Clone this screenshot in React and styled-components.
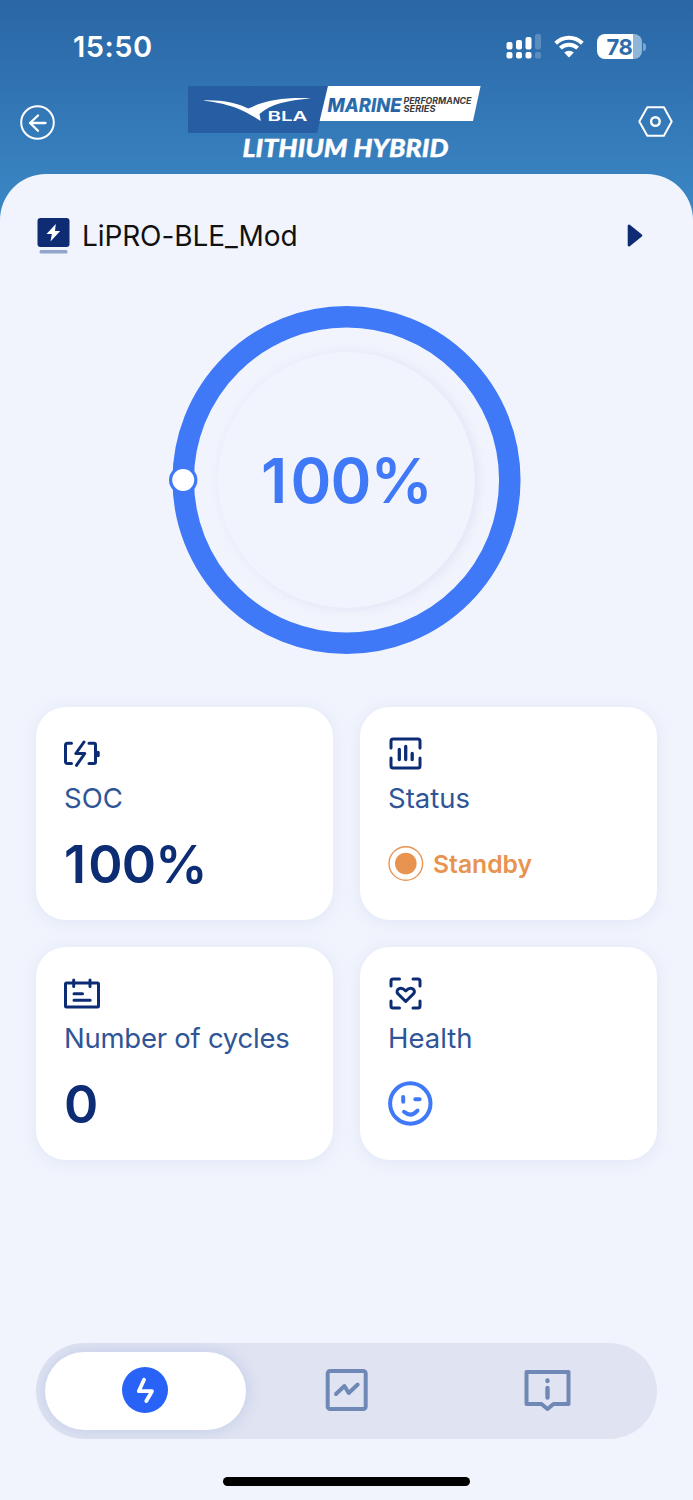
import React from 'react'
import styled, { createGlobalStyle } from 'styled-components'

const GlobalStyle = createGlobalStyle`
	* {
		box-sizing: border-box;
	}

	body {
		margin: 0;
		background: #f1f4fc;
		font-family: Inter, 'Liberation Sans', sans-serif;
	}

	svg {
		display: block;
		flex-shrink: 0;
	}
`

const Screen = styled.div`
	display: flex;
	flex-direction: column;
	width: 693px;
	height: 1500px;
	overflow: hidden;
	background: linear-gradient(#2a66a6 0, #3881bf 175px, #3a88c8 220px);
`

const StatusBar = styled.div`
	display: flex;
	justify-content: space-between;
	align-items: center;
	height: 86px;
	padding: 7px 47px 0 73px;
`

const Time = styled.div`
	color: #fff;
	font-size: 29px;
	font-weight: 600;
	letter-spacing: 0.5px;
	line-height: 34px;
`

const StatusIcons = styled.div`
	display: flex;
	align-items: center;
	gap: 13px;
`

const BatteryWrap = styled.div`
	display: flex;
	align-items: center;
	gap: 1px;
`

const Battery = styled.div`
	display: flex;
	align-items: center;
	justify-content: center;
	width: 45px;
	height: 25px;
	border-radius: 8px;
	background: linear-gradient(90deg, #fff 36px, #8fb6d8 36px);
	color: #2d6bab;
	font-size: 22px;
	font-weight: 700;
	letter-spacing: -0.5px;
`

const BatteryNub = styled.div`
	width: 3px;
	height: 8px;
	border-radius: 0 3px 3px 0;
	background: #7aa7cf;
`

const Header = styled.header`
	display: flex;
	justify-content: space-between;
	height: 88px;
	padding: 0 20px;
`

const LogoWrap = styled.div`
	margin-right: 24px;
`

const HeaderButton = styled.button`
	height: 36px;
	margin-top: ${({ $top }) => $top}px;
	padding: 0;
	border: 0;
	background: none;
`

const Panel = styled.main`
	display: flex;
	flex: 1;
	flex-direction: column;
	padding: 0 36px;
	border-radius: 46px 46px 0 0;
	background: #f1f4fc;
`

const DeviceRow = styled.div`
	display: flex;
	align-items: center;
	height: 36px;
	margin-top: 44px;
	padding: 0 14px 0 1px;
`

const DeviceName = styled.div`
	flex: 1;
	margin-left: 12px;
	color: #111;
	font-size: 28px;
	letter-spacing: -0.1px;
	line-height: 36px;
`

const Gauge = styled.div`
	display: grid;
	place-items: center;
	height: 352px;
	margin-top: 50px;

	> * {
		grid-area: 1 / 1;
	}
`

const GaugeFace = styled.div`
	width: 257px;
	height: 256px;
	border-radius: 50%;
	box-shadow: 3px 1px 10px rgba(212, 215, 240, 0.55);
	background: #f1f4fc;
`

const GaugeValue = styled.div`
	z-index: 1;
	padding-top: 2px;
	color: #4079f7;
	font-size: 62px;
	font-weight: 600;
	letter-spacing: -0.8px;
	line-height: 62px;

	&::first-letter {
		margin-right: 4px;
	}
`

const Cards = styled.div`
	display: grid;
	grid-template-columns: 1fr 1fr;
	grid-auto-rows: 213px;
	gap: 27px;
	margin-top: 51px;
`

const CardBox = styled.section`
	padding: 29px 28px 0;
	border-radius: 30px;
	background: #fff;
	box-shadow: 0 2px 14px rgba(205, 217, 246, 0.5);
`

const CardLabel = styled.div`
	margin-top: 8px;
	color: #2f5597;
	font-size: 27.5px;
	letter-spacing: ${({ $tight }) => ($tight ? '-0.25px' : '0')};
	line-height: 36px;
`

const CardBody = styled.div`
	display: flex;
	align-items: center;
	height: 60px;
	margin-top: 17px;
`

const Value = styled.div`
	padding-top: 3px;
	color: #0c2c74;
	font-size: 52px;
	font-weight: 600;
	letter-spacing: -0.8px;
	line-height: 60px;

	&::first-letter {
		margin-right: 3px;
	}
`

const StatusText = styled.div`
	margin-left: 9px;
	padding-top: 1px;
	color: #e89350;
	font-size: 24.7px;
	font-weight: 600;
`

const TabBar = styled.nav`
	display: grid;
	grid-template-columns: repeat(3, 201px);
	height: 96px;
	margin-top: 183px;
	padding: 9px;
	border-radius: 48px;
	background: #e0e4f2;
	overflow: hidden;
`

const Tab = styled.button`
	display: flex;
	align-items: center;
	justify-content: center;
	padding: 0 1px 3px 0;
	border: 0;
	border-radius: 39px;
	background: ${({ $active }) => ($active ? '#fff' : 'none')};
	box-shadow: ${({ $active }) =>
		$active ? '0 0 18px rgba(178, 192, 228, 0.7)' : 'none'};
`

const HomeIndicator = styled.div`
	align-self: center;
	width: 247px;
	height: 9px;
	margin-top: 37.5px;
	border-radius: 5px;
	background: #000;
`

const SignalIcon = () => (
	<svg width='35' height='25' viewBox='0 0 35 25' fill='#fff'>
		<rect x='.5' y='8' width='6' height='7.5' rx='2' />
		<rect x='10' y='6' width='6' height='9.5' rx='2' />
		<rect x='19.5' y='3' width='6' height='12.5' rx='2' />
		<rect x='29' y='0' width='6' height='15.5' rx='2' opacity='.22' />
		<rect x='.5' y='18' width='6' height='6.5' rx='2' />
		<rect x='10' y='18' width='6' height='6.5' rx='2' />
		<rect x='19.5' y='18' width='6' height='6.5' rx='2' />
		<rect x='29' y='18' width='6' height='6.5' rx='2' opacity='.22' />
	</svg>
)

const WifiIcon = () => (
	<svg width='30' height='23' viewBox='0 0 30 23' fill='none'>
		<path
			d='M1.7 8.2a19 19 0 0 1 26.6 0M6.4 13.2a12.2 12.2 0 0 1 17.2 0'
			stroke='#fff'
			strokeWidth='4'
		/>
		<path
			d='M10.2 17.6a7 7 0 0 1 9.6 0l-4.2 4.5a.9.9 0 0 1-1.2 0z'
			fill='#fff'
		/>
	</svg>
)

const BackIcon = () => (
	<svg
		width='35'
		height='35'
		viewBox='0 0 35 35'
		fill='none'
		stroke='#fff'
		strokeWidth='2'
		strokeLinecap='round'
		strokeLinejoin='round'>
		<circle cx='17.5' cy='17.5' r='16.3' />
		<path d='M25.5 18H10M18 10.5 10 18l8 7.8' strokeWidth='2.3' />
	</svg>
)

const SettingsIcon = () => (
	<svg
		width='35'
		height='31'
		viewBox='0 0 35 31'
		fill='none'
		stroke='#fff'
		strokeWidth='2'>
		<path
			d='M9.3 1.2h16.6l7.8 14.3-7.8 14.2H9.3L1.3 15.5z'
			strokeLinejoin='round'
		/>
		<circle cx='17.4' cy='15.5' r='4.3' strokeWidth='2.4' />
	</svg>
)

const Logo = () => (
	<svg width='293' height='76' viewBox='0 0 293 76'>
		<defs>
			<linearGradient id='marine' x1='0' y1='0' x2='1' y2='1'>
				<stop offset='0' stopColor='#1f5598' />
				<stop offset='0.5' stopColor='#2d72b2' />
				<stop offset='1' stopColor='#23569a' />
			</linearGradient>
		</defs>
		<path d='M0 0h140l-11 47H0z' fill='#265da3' />
		<path d='M140 0h152.6l-7.6 35H131.6z' fill='#fff' />
		<path
			d='M15 14.4C35 13.8 49 17 60.3 22.6 76 14.5 96 11.2 123 12.3 99 14.4 82 18.5 71.5 28l1.3 6.9C62 28.5 50 18.5 15 14.4z'
			fill='#fff'
		/>
		<text
			x='79.5'
			y='35.3'
			fill='#fff'
			fontSize='13'
			fontWeight='600'
			textLength='40'
			lengthAdjust='spacingAndGlyphs'>
			BLA
		</text>
		<text
			x='139.5'
			y='25.8'
			fill='url(#marine)'
			fontSize='19'
			fontWeight='800'
			fontStyle='italic'
			textLength='74'
			lengthAdjust='spacingAndGlyphs'>
			MARINE
		</text>
		<g fill='#3a3a3c' fontSize='9' fontWeight='700' fontStyle='italic'>
			<text
				x='215.5'
				y='18.4'
				textLength='68'
				lengthAdjust='spacingAndGlyphs'>
				PERFORMANCE
			</text>
			<text
				x='215.5'
				y='26.3'
				textLength='32'
				lengthAdjust='spacingAndGlyphs'>
				SERIES
			</text>
		</g>
		<text
			x='54.5'
			y='70.6'
			fill='#fff'
			stroke='#fff'
			strokeWidth='0.4'
			fontFamily='Lato, sans-serif'
			fontSize='25'
			fontWeight='900'
			fontStyle='italic'
			textLength='206'
			lengthAdjust='spacingAndGlyphs'>
			LITHIUM HYBRID
		</text>
	</svg>
)

const DeviceIcon = () => (
	<svg width='33' height='36' viewBox='0 0 33 36'>
		<rect x='.5' y='0' width='32' height='29' rx='3' fill='#0e2b73' />
		<path d='M18.8 6 9.5 16h5.4l-1.4 7.5L23.2 13H18z' fill='#fff' />
		<rect x='2.5' y='32' width='28' height='3.4' rx='1.5' fill='#93a5cd' />
	</svg>
)

const ArrowIcon = () => (
	<svg width='16' height='24' viewBox='0 0 16 24'>
		<path
			d='M2 1.8v19.5L14 11.5z'
			fill='#0e2b73'
			stroke='#0e2b73'
			strokeWidth='2.6'
			strokeLinejoin='round'
		/>
	</svg>
)

const GaugeRing = () => (
	<svg width='355' height='352' viewBox='0 0 355 352' fill='none'>
		<circle
			cx='177.5'
			cy='176'
			r='163.3'
			stroke='#4079f7'
			strokeWidth='21.5'
		/>
		<circle cx='14.2' cy='176' r='14.2' fill='#4079f7' />
		<circle cx='14.2' cy='176' r='11' fill='#fff' />
	</svg>
)

const CardIcon = ({ children }) => (
	<svg
		width='36'
		height='36'
		viewBox='0 0 36 36'
		fill='none'
		stroke='#0c2c74'
		strokeWidth='3'
		strokeLinecap='round'
		strokeLinejoin='round'>
		{children}
	</svg>
)

const SocIcon = () => (
	<CardIcon>
		<path d='M7.5 7.3h-4q-2 0-2 2v16.2q0 2 2 2h4M25 7.3h5q1.500 0 1.500 1.500V26q0 1.500-1.500 1.500h-5' />
		<path d='M20 6 11.8 17.5h9L12.5 29.3' />
		<path d='M34 16.500v3' strokeWidth='3.5' />
	</CardIcon>
)

const StatusIcon = () => (
	<CardIcon>
		<path d='M3 12V5q0-2 2-2h25q2 0 2 2v7M3 22v8q0 2 2 2h25q2 0 2-2v-8' />
		<path
			d='M11.3 13.5v10M17.7 10.3v13.200M24.200 17.500v6'
			strokeWidth='3.3'
		/>
	</CardIcon>
)

const CyclesIcon = () => (
	<CardIcon>
		<rect x='1.5' y='7' width='33' height='24' rx='1' />
		<path d='M9.700 4v6.500M26 4v6.500M10 17.800h8.500M10 24.300h16.200' />
	</CardIcon>
)

const HealthIcon = () => (
	<CardIcon>
		<path d='M3 10V5q0-2 2-2h6.500M25 3h5q2 0 2 2v5M3 25v5q0 2 2 2h6.500M25 32h5q2 0 2-2v-5' />
		<path d='M17.700 25.500 9.800 17.600C7 13.500 12.500 9.800 17.700 14.800 23 9.800 28.500 13.500 25.600 17.600z' />
	</CardIcon>
)

const StandbyIcon = () => (
	<svg width='36' height='36' viewBox='0 0 36 36' fill='none'>
		<circle cx='17.8' cy='18.5' r='16.8' stroke='#e89350' strokeWidth='1.4' />
		<circle cx='17.8' cy='18.5' r='10.8' fill='#e89350' />
	</svg>
)

const SmileIcon = () => (
	<svg
		width='45'
		height='45'
		viewBox='0 0 45 45'
		fill='none'
		stroke='#4079f7'
		strokeWidth='4'
		strokeLinecap='round'>
		<circle cx='22.3' cy='22.5' r='20.2' />
		<path d='M15.2 16v4.800M27.300 18.300h4.300M16 30.800q7 6 13.500-1.200' />
	</svg>
)

const PowerIcon = () => (
	<svg width='46' height='46' viewBox='0 0 46 46' fill='none'>
		<circle cx='23' cy='23' r='23' fill='#2862f6' />
		<path
			d='M22 12.8 16.800 24.200H30L24.300 34'
			stroke='#fff'
			strokeWidth='3.8'
			strokeLinecap='round'
			strokeLinejoin='round'
		/>
	</svg>
)

const ChartIcon = () => (
	<svg
		width='43'
		height='42'
		viewBox='0 0 43 42'
		fill='none'
		stroke='#7088b6'
		strokeWidth='4'
		strokeLinecap='round'
		strokeLinejoin='round'>
		<rect x='2.7' y='2' width='38' height='38' rx='2.5' />
		<path d='m11 25 8.400-8 4.300 7 9-8.500' />
	</svg>
)

const InfoIcon = () => (
	<svg
		width='47'
		height='42'
		viewBox='0 0 47 42'
		fill='none'
		stroke='#7088b6'
		strokeWidth='4'
		strokeLinecap='round'
		strokeLinejoin='round'>
		<path d='M2.5 3h42v32H29.500l-6 5-6-5h-15z' />
		<path d='M23.500 11.500v.5M23.500 19v9.500' strokeWidth='4.4' />
	</svg>
)

const Card = ({ icon, label, children }) => {
	return (
		<CardBox>
			{icon}
			<CardLabel $tight={label.length > 10}>{label}</CardLabel>
			<CardBody>{children}</CardBody>
		</CardBox>
	)
}

const App = () => {
	return (
		<Screen>
			<GlobalStyle />
			<StatusBar>
				<Time>15:50</Time>
				<StatusIcons>
					<SignalIcon />
					<WifiIcon />
					<BatteryWrap>
						<Battery>78</Battery>
						<BatteryNub />
					</BatteryWrap>
				</StatusIcons>
			</StatusBar>
			<Header>
				<HeaderButton $top={18} aria-label='Back'>
					<BackIcon />
				</HeaderButton>
				<LogoWrap>
					<Logo />
				</LogoWrap>
				<HeaderButton $top={17} aria-label='Settings'>
					<SettingsIcon />
				</HeaderButton>
			</Header>
			<Panel>
				<DeviceRow>
					<DeviceIcon />
					<DeviceName>LiPRO-BLE_Mod</DeviceName>
					<ArrowIcon />
				</DeviceRow>
				<Gauge>
					<GaugeFace />
					<GaugeRing />
					<GaugeValue>100%</GaugeValue>
				</Gauge>
				<Cards>
					<Card icon={<SocIcon />} label='SOC'>
						<Value>100%</Value>
					</Card>
					<Card icon={<StatusIcon />} label='Status'>
						<StandbyIcon />
						<StatusText>Standby</StatusText>
					</Card>
					<Card icon={<CyclesIcon />} label='Number of cycles'>
						<Value>0</Value>
					</Card>
					<Card icon={<HealthIcon />} label='Health'>
						<SmileIcon />
					</Card>
				</Cards>
				<TabBar>
					<Tab $active aria-label='Power'>
						<PowerIcon />
					</Tab>
					<Tab aria-label='Chart'>
						<ChartIcon />
					</Tab>
					<Tab aria-label='Info'>
						<InfoIcon />
					</Tab>
				</TabBar>
				<HomeIndicator />
			</Panel>
		</Screen>
	)
}

export default App
